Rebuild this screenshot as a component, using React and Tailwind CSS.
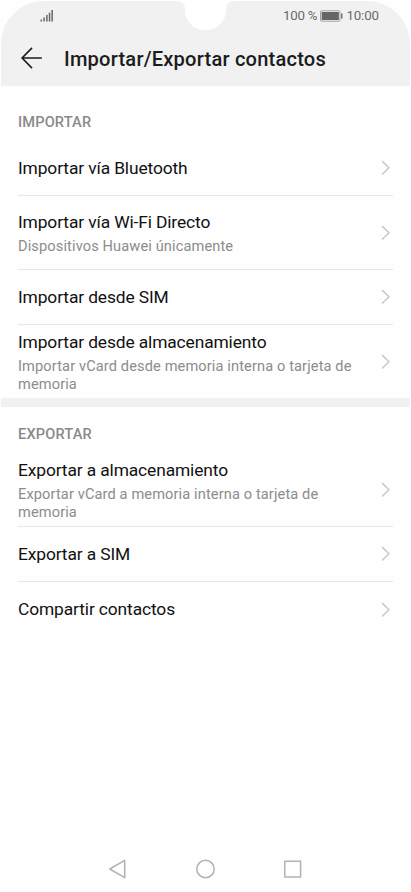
import React from 'react';

const importItems = [
  { title: 'Importar vía Bluetooth', height: 'h-[55px]' },
  { title: 'Importar vía Wi-Fi Directo', detail: 'Dispositivos Huawei únicamente', height: 'h-[74px]' },
  { title: 'Importar desde SIM', height: 'h-[55px]' },
  {
    title: 'Importar desde almacenamiento',
    detail: 'Importar vCard desde memoria interna o tarjeta de memoria',
    height: 'h-[73px]',
  },
];

const exportItems = [
  {
    title: 'Exportar a almacenamiento',
    detail: 'Exportar vCard a memoria interna o tarjeta de memoria',
    height: 'h-[74px]',
  },
  { title: 'Exportar a SIM', height: 'h-[55px]' },
  { title: 'Compartir contactos', height: 'h-[55px]' },
];

function Chevron() {
  return (
    <svg className="mr-[2px] shrink-0" width="10" height="16" viewBox="0 0 10 16" fill="none">
      <path d="M1.1 1.1L7.9 7.8L1.1 14.5" stroke="#c9c9c9" strokeWidth="1.5" />
    </svg>
  );
}

function Row({ item, last }) {
  return (
    <li
      className={`mx-[18px] flex items-center justify-between ${item.height} ${
        last ? '' : 'border-b border-[#e7e7e7]'
      }`}
    >
      <div className="w-[345px]">
        <p className="text-[17.4px] leading-[23px] tracking-[-0.13px] text-[#111]">{item.title}</p>
        {item.detail && (
          <p className="-mb-px mt-1 text-[14.6px] leading-[17.5px] tracking-[0.12px] text-[#8c8c8c]">
            {item.detail}
          </p>
        )}
      </div>
      <Chevron />
    </li>
  );
}

function StatusBar() {
  return (
    <div className="flex h-[29px] items-center justify-between pl-[39px] pr-[31px] text-[13.3px] text-[#6a6a6a]">
      <svg width="14" height="12" viewBox="0 0 14 12" fill="#666">
        <rect x="0.5" y="9.5" width="1.5" height="2" />
        <rect x="3.3" y="7.5" width="1.5" height="4" />
        <rect x="6.1" y="5" width="1.5" height="6.5" />
        <rect x="8.8" y="2.7" width="1.5" height="8.8" />
        <rect x="11.4" y="0" width="1.5" height="11.5" />
      </svg>
      <div className="flex items-center">
        <span className="tracking-[-0.2px]">100 %</span>
        <svg className="ml-[3px] mr-[3px]" width="23" height="12" viewBox="0 0 23 12">
          <rect x="0.5" y="0.8" width="19.5" height="10.4" rx="1.2" fill="none" stroke="#999" strokeWidth="0.9" />
          <rect x="1.6" y="2" width="17.3" height="8" fill="#666" />
          <rect x="21" y="3.3" width="1.5" height="5.4" rx="0.5" fill="#777" />
        </svg>
        <span className="tracking-[-0.1px]">10:00</span>
      </div>
    </div>
  );
}

export default function App() {
  return (
    <div className="h-[892px] w-[411px] overflow-hidden bg-white px-px pt-px font-['Roboto',sans-serif]">
      <div className="relative flex h-full flex-col bg-[#fefefe]">
        {/* Header */}
        <header className="h-[85px] rounded-t-[43px] bg-[#f1f1f1]">
          <StatusBar />
          <div className="flex h-[56px] items-center pl-5">
            <svg width="22" height="22" viewBox="0 0 22 22" fill="none" stroke="#1c1c1c" strokeWidth="1.6">
              <path d="M20.8 11H1.2M11 0.9L1.1 11L11 21.1" />
            </svg>
            <h1 className="ml-[21px] mt-[2px] text-[20.1px] font-medium leading-6 tracking-[0.2px] text-[#1c1c1c]">
              Importar/Exportar contactos
            </h1>
          </div>
        </header>

        {/* Notch */}
        <svg className="absolute left-[175px] top-0" width="60" height="30" viewBox="0 0 60 30" fill="#fff">
          <path d="M0 0C6.5 0 9 3 9 9C9 20.5 18 29.2 29.5 29.2C41 29.2 50 20.5 50 9C50 3 52.5 0 59 0Z" />
        </svg>

        <main className="flex-1">
          <section>
            <h2 className="h-[55px] pl-[17px] pt-[26px] text-[14.6px] font-medium leading-5 tracking-[0.15px] text-[#8a8a8a]">
              IMPORTAR
            </h2>
            <ul className="-mx-px">
              {importItems.map((item, index) => (
                <Row key={item.title} item={item} last={index === importItems.length - 1} />
              ))}
            </ul>
          </section>

          <div className="h-[9px] bg-[#f1f1f1]" />

          <section>
            <h2 className="h-[46px] pl-[17px] pt-[17px] text-[14.6px] font-medium leading-5 tracking-[0.15px] text-[#8a8a8a]">
              EXPORTAR
            </h2>
            <ul className="-mx-px">
              {exportItems.map((item, index) => (
                <Row key={item.title} item={item} last={index === exportItems.length - 1} />
              ))}
            </ul>
          </section>
        </main>

        {/* Navigation bar */}
        <nav className="flex h-[46px] items-center justify-between pl-[107px] pr-[108px]">
          <svg width="20" height="20" viewBox="0 0 20 20" fill="none" stroke="#b2b2b2" strokeWidth="1.5" strokeLinejoin="round">
            <path d="M16.7 1.3V18.7L1.8 10Z" />
          </svg>
          <svg width="20" height="20" viewBox="0 0 20 20" fill="none" stroke="#b2b2b2" strokeWidth="1.5">
            <circle cx="9.5" cy="10" r="8.7" />
          </svg>
          <svg width="18" height="18" viewBox="0 0 18 18" fill="none" stroke="#b2b2b2" strokeWidth="1.5" strokeLinejoin="round">
            <rect x="0.8" y="1.2" width="15.8" height="15.8" />
          </svg>
        </nav>
      </div>
    </div>
  );
}
